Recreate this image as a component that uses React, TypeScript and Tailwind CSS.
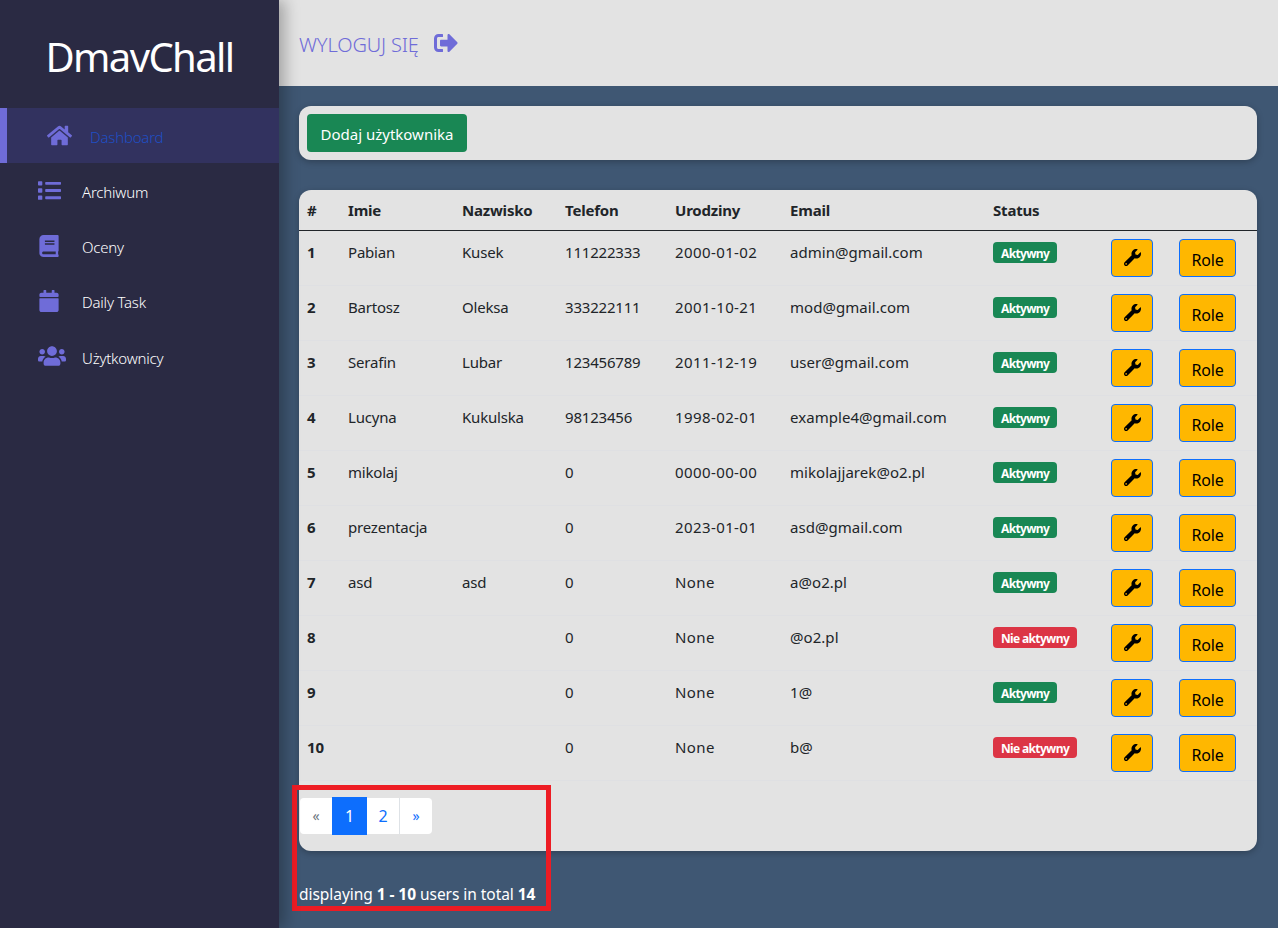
import { FaBook, FaCalendar, FaHome, FaList, FaSignOutAlt, FaUsers, FaWrench } from "react-icons/fa";

const users = [
  { id: 1, first: "Pabian", last: "Kusek", phone: "111222333", born: "2000-01-02", email: "admin@gmail.com", active: true },
  { id: 2, first: "Bartosz", last: "Oleksa", phone: "333222111", born: "2001-10-21", email: "mod@gmail.com", active: true },
  { id: 3, first: "Serafin", last: "Lubar", phone: "123456789", born: "2011-12-19", email: "user@gmail.com", active: true },
  { id: 4, first: "Lucyna", last: "Kukulska", phone: "98123456", born: "1998-02-01", email: "example4@gmail.com", active: true },
  { id: 5, first: "mikolaj", last: "", phone: "0", born: "0000-00-00", email: "mikolajjarek@o2.pl", active: true },
  { id: 6, first: "prezentacja", last: "", phone: "0", born: "2023-01-01", email: "asd@gmail.com", active: true },
  { id: 7, first: "asd", last: "asd", phone: "0", born: "None", email: "a@o2.pl", active: true },
  { id: 8, first: "", last: "", phone: "0", born: "None", email: "@o2.pl", active: false },
  { id: 9, first: "", last: "", phone: "0", born: "None", email: "1@", active: true },
  { id: 10, first: "", last: "", phone: "0", born: "None", email: "b@", active: false },
];

const menu = [
  { label: "Archiwum", icon: <FaList size={23} /> },
  { label: "Oceny", icon: <FaBook size={22} /> },
  { label: "Daily Task", icon: <FaCalendar size={22} /> },
  { label: "Użytkownicy", icon: <FaUsers size={28} /> },
];

const App = () => {
  return (
    <div className="relative flex h-[928px] w-[1278px] overflow-hidden bg-[#3f5773] font-['Noto_Sans','Open_Sans',sans-serif] text-[15px] tracking-[-0.2px] text-[#212529]">
      {/* SIDEBAR */}
      <aside className="z-10 w-[279px] shrink-0 bg-[#2a2a43] text-white shadow-[6px_0_14px_rgba(0,0,0,0.28)]">
        <div className="flex h-[108px] items-center justify-center pt-[6px] text-[40px] tracking-[-1.6px] text-white">DmavChall</div>

        <div className="flex h-[55px] items-center border-l-[7px] border-[#6f6cd8] bg-[#32325f] pl-[40px] text-[#1f4fc4]">
          <span className="flex w-[43px] text-[#6f6cd8]"><FaHome size={25} /></span>
          <span className="pt-[3px] font-light">Dashboard</span>
        </div>

        {menu.map((item) => (
          <div key={item.label} className="flex h-[55.25px] items-center pl-[38px] font-light">
            <span className="flex w-[44px] text-[#6f6cd8]">{item.icon}</span>
            <span className="pt-[3px]">{item.label}</span>
          </div>
        ))}
      </aside>

      {/* MAIN */}
      <main className="flex min-w-0 flex-1 flex-col">
        <div className="flex h-[86px] items-center bg-[#e3e3e3] pl-[20px] text-[20px] font-light tracking-[-0.15px] text-[#6f6cd8]">
          <span className="pt-[4px]">WYLOGUJ SIĘ</span>
          <span className="ml-[15px] -mt-[1px]"><FaSignOutAlt size={24} /></span>
        </div>

        <div className="flex flex-col pl-[20px] pr-[21px] pt-[20px]">
          <div className="rounded-xl bg-[#e3e3e3] p-2 shadow-[0_2px_6px_rgba(0,0,0,0.25)]">
            <button className="block h-[38px] w-[160px] rounded-[4px] bg-[#198754] pt-[2px] text-center tracking-[0px] text-white">Dodaj użytkownika</button>
          </div>

          <div className="mt-[30px] h-[661px] rounded-xl bg-[#e3e3e3] shadow-[0_2px_6px_rgba(0,0,0,0.25)]">
            <table className="w-full table-fixed border-collapse">
              <colgroup>
                <col className="w-[49px]" />
                <col className="w-[114px]" />
                <col className="w-[103px]" />
                <col className="w-[110px]" />
                <col className="w-[115px]" />
                <col className="w-[203px]" />
                <col className="w-[118px]" />
                <col className="w-[68px]" />
                <col />
              </colgroup>
              <thead>
                <tr className="h-[40px] border-b border-[#212529] text-left font-bold">
                  <th className="pl-[8px]">#</th>
                  <th>Imie</th>
                  <th>Nazwisko</th>
                  <th>Telefon</th>
                  <th>Urodziny</th>
                  <th>Email</th>
                  <th>Status</th>
                  <th></th>
                  <th></th>
                </tr>
              </thead>
              <tbody>
                {users.map((u) => (
                  <tr key={u.id} className="h-[55px] border-b border-[#dfe0e3] align-top">
                    <td className="pl-[8px] pt-[10px] font-bold">{u.id}</td>
                    <td className="pt-[10px]">{u.first}</td>
                    <td className="pt-[10px]">{u.last}</td>
                    <td className="pt-[10px]">{u.phone}</td>
                    <td className="pt-[10px] tracking-[0.4px]">{u.born}</td>
                    <td className="pt-[10px] tracking-[0.05px]">{u.email}</td>
                    <td className="pt-[11px]">
                      <span className={`block h-[21px] w-fit rounded-[4px] px-[8px] pt-[1px] text-[12px] font-bold leading-[21px] tracking-[-0.65px] text-white ${u.active ? "bg-[#198754]" : "bg-[#dc3545]"}`}>
                        {u.active ? "Aktywny" : "Nie aktywny"}
                      </span>
                    </td>
                    <td className="pt-[8px]">
                      <button className="flex h-[38px] w-[42px] items-center justify-center rounded-[4px] border border-[#0d6efd] bg-[#ffb700] text-black">
                        <FaWrench size={17} />
                      </button>
                    </td>
                    <td className="pt-[8px]">
                      <button className="block h-[38px] w-[57px] rounded-[4px] border border-[#0d6efd] bg-[#ffb700] pt-[4px] text-center text-[16px] text-black">Role</button>
                    </td>
                  </tr>
                ))}
              </tbody>
            </table>

            <div className="ml-[1px] mt-[16px] flex h-[38px] w-[132px] items-center text-[16px] text-[#0d6efd]">
              <span className="flex h-[36px] w-[32px] items-center justify-center rounded-l-[4px] bg-white text-[14px] text-[#6c757d]">«</span>
              <span className="flex h-[38px] w-[35px] items-center justify-center bg-[#0d6efd] text-white">1</span>
              <span className="flex h-[36px] w-[33px] items-center justify-center border-r border-[#dee2e6] bg-white">2</span>
              <span className="flex h-[36px] w-[32px] items-center justify-center rounded-r-[4px] bg-white text-[14px]">»</span>
            </div>
          </div>

          <p className="mt-[32px] text-[15.5px] tracking-[-0.05px] text-white">
            displaying <b>1 - 10</b> users in total <b>14</b>
          </p>
        </div>
      </main>

      {/* czerwona ramka z oryginalnego zrzutu */}
      <div className="pointer-events-none absolute left-[292px] top-[785px] h-[126px] w-[259px] border-[5px] border-[#ed1c24]"></div>
    </div>
  );
};

export default App;
